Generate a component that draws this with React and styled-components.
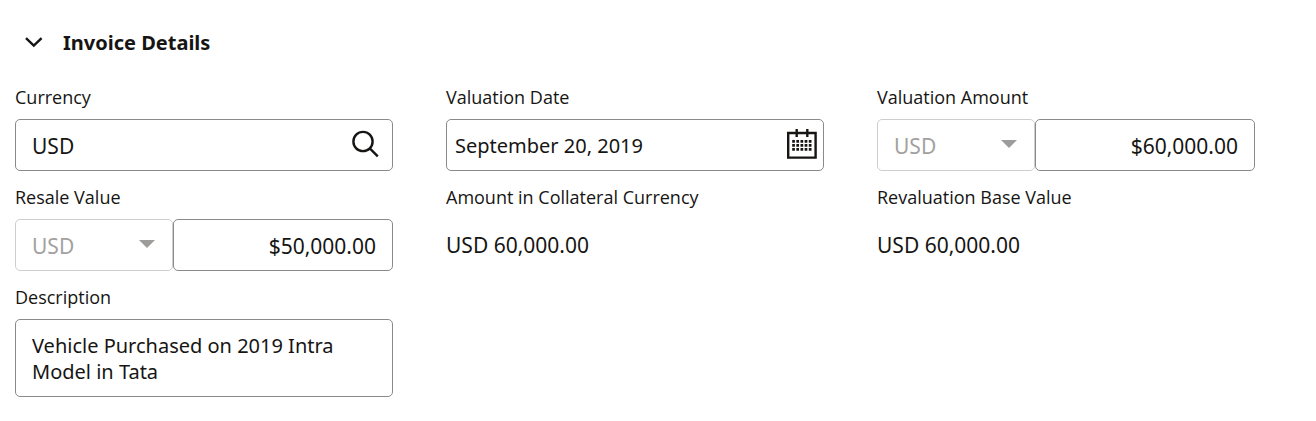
import React, { useState } from 'react';
import styled, { createGlobalStyle } from 'styled-components';

const GlobalStyle = createGlobalStyle`
  *, *::before, *::after { box-sizing: border-box; }
  body {
    margin: 0;
    background: #fff;
    color: #161513;
    font-family: 'Noto Sans', 'Open Sans', sans-serif;
  }
`;

const Section = styled.section`
  padding: 29px 61px 24px 15px;
`;

const Heading = styled.h2`
  margin: 0 0 28px;
  font-size: 20px;
  line-height: 28px;
  font-weight: 700;
`;

const Toggle = styled.button`
  display: flex;
  align-items: center;
  gap: 20px;
  padding: 0 0 0 10px;
  border: 0;
  background: none;
  color: inherit;
  font: inherit;
  cursor: pointer;
`;

const Chevron = styled.svg`
  width: 18px;
  height: 12px;
  overflow: visible;
  fill: none;
  stroke: currentColor;
  stroke-width: 2.4;
  transform: ${({ $open }) => ($open ? 'none' : 'rotate(-90deg)')};
`;

const Grid = styled.div`
  display: grid;
  grid-template-columns: repeat(3, minmax(0, 1fr));
  gap: 14px 53px;
`;

const Field = styled.div`
  grid-column-start: ${({ $column }) => $column || 'auto'};
  display: flex;
  flex-direction: column;
  gap: 10px;
`;

const Label = styled.label`
  font-family: 'Open Sans', 'Noto Sans', sans-serif;
  font-size: 18px;
  line-height: 24px;
  font-weight: 500;
`;

const Box = styled.div`
  display: flex;
  align-items: center;
  min-width: 0;
  height: 52px;
  padding: ${({ $padding }) => $padding || '0 16px'};
  border: 1px solid ${({ $muted }) => ($muted ? '#cfcecd' : '#8b8a89')};
  border-radius: 5px;
  background: #fff;
  color: ${({ $muted }) => ($muted ? '#a2a1a0' : 'inherit')};
`;

const Input = styled.input`
  flex: 1;
  width: 100%;
  min-width: 0;
  padding: 1px 0 0;
  border: 0;
  outline: 0;
  background: none;
  color: inherit;
  font: inherit;
  font-size: ${({ $code }) => ($code ? '21px' : '20px')};
  line-height: 26px;
  text-align: ${({ $align }) => $align || 'left'};
`;

const Select = styled.select`
  flex: 1;
  min-width: 0;
  padding: 1px 0 0;
  border: 0;
  appearance: none;
  background: none;
  color: inherit;
  opacity: 1;
  font: inherit;
  font-size: 21px;
  line-height: 26px;
`;

const Split = styled.div`
  display: grid;
  grid-template-columns: minmax(0, 5fr) minmax(0, 7fr);
`;

const IconButton = styled.button`
  display: flex;
  padding: 0;
  border: 0;
  background: none;
  color: inherit;
  cursor: pointer;
`;

const Icon = styled.svg`
  display: block;
  width: 32px;
  height: 32px;
  fill: none;
  stroke: currentColor;
  stroke-width: 2.4;
`;

const Arrow = styled.svg`
  width: 16px;
  height: 12px;
  fill: #9d9c9b;
`;

const Output = styled.output`
  padding-top: 1px;
  font-size: 21px;
  line-height: 51px;
`;

const TextArea = styled.textarea`
  display: block;
  width: 100%;
  height: 78px;
  padding: 13px 16px 11px;
  border: 1px solid #8b8a89;
  border-radius: 5px;
  outline: 0;
  resize: none;
  overflow: hidden;
  background: #fff;
  color: inherit;
  font: inherit;
  font-size: 20px;
  line-height: 26px;
`;

const SearchIcon = () => (
  <Icon viewBox="0 0 32 32" aria-hidden="true">
    <circle cx="14" cy="12.5" r="9.6" />
    <path d="M20.8 19.3l8 8" />
  </Icon>
);

const CalendarIcon = () => (
  <Icon viewBox="0 0 32 32" aria-hidden="true">
    <path d="M2.2 4h27.4v24.6H2.2zM10.7 0v8M21.3 0v8" />
    <path d="M6.2 12.4h19.5M6.2 16.4h19.5M6.2 20.4h19.5" strokeWidth="2.6" strokeDasharray="2.7 1.45" />
  </Icon>
);

function MoneyField({ id, label, amount }) {
  return (
    <Field>
      <Label htmlFor={id}>{label}</Label>
      <Split>
        <Box $muted $padding="0 17px 0 16px">
          <Select disabled defaultValue="USD" aria-label={`${label} currency`}>
            <option>USD</option>
          </Select>
          <Arrow viewBox="0 0 16 12" aria-hidden="true">
            <path d="M0 1h16L8 9z" />
          </Arrow>
        </Box>
        <Box>
          <Input id={id} defaultValue={amount} $code $align="right" />
        </Box>
      </Split>
    </Field>
  );
}

function ReadOnlyField({ id, label, value }) {
  return (
    <Field>
      <Label htmlFor={id}>{label}</Label>
      <Output id={id}>{value}</Output>
    </Field>
  );
}

export default function App() {
  const [open, setOpen] = useState(true);
  return (
    <>
      <GlobalStyle />
      <Section>
        <Heading>
          <Toggle type="button" aria-expanded={open} onClick={() => setOpen(!open)}>
            <Chevron $open={open} viewBox="0 0 18 12" aria-hidden="true">
              <path d="M1 1.2l7.8 7.5 7.8-7.5" />
            </Chevron>
            Invoice Details
          </Toggle>
        </Heading>
        {open && (
          <Grid>
            <Field>
              <Label htmlFor="currency">Currency</Label>
              <Box $padding="0 11px 0 16px">
                <Input id="currency" defaultValue="USD" $code />
                <IconButton type="button" aria-label="Search currency">
                  <SearchIcon />
                </IconButton>
              </Box>
            </Field>
            <Field>
              <Label htmlFor="valuation-date">Valuation Date</Label>
              <Box $padding="0 5px 0 8px">
                <Input id="valuation-date" defaultValue="September 20, 2019" />
                <IconButton type="button" aria-label="Select date">
                  <CalendarIcon />
                </IconButton>
              </Box>
            </Field>
            <MoneyField id="valuation-amount" label="Valuation Amount" amount="$60,000.00" />
            <MoneyField id="resale-value" label="Resale Value" amount="$50,000.00" />
            <ReadOnlyField id="collateral-amount" label="Amount in Collateral Currency" value="USD 60,000.00" />
            <ReadOnlyField id="base-value" label="Revaluation Base Value" value="USD 60,000.00" />
            <Field $column={1}>
              <Label htmlFor="description">Description</Label>
              <TextArea id="description" defaultValue="Vehicle Purchased on 2019 Intra Model in Tata" />
            </Field>
          </Grid>
        )}
      </Section>
    </>
  );
}
